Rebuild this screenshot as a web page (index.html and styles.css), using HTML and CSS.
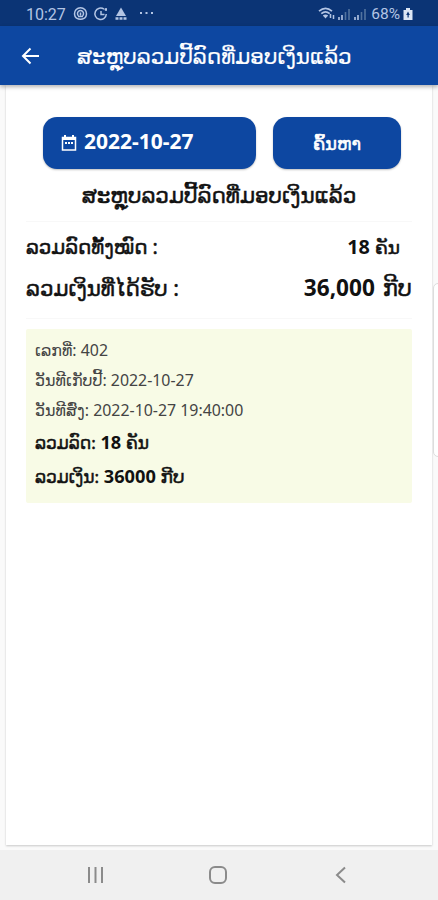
FILE: index.html
```html
<!DOCTYPE html>
<html lang="lo">
<head>
  <meta charset="UTF-8">
  <meta name="viewport" content="width=device-width, initial-scale=1">
  <title>ສະຫຼຸບລວມປີ້ລົດ</title>
  <link rel="stylesheet" href="styles.css">
</head>
<body>

  <!-- Status bar -->
  <div class="status-bar">
    <span class="clock">10:27</span>
    <svg class="status-icons" width="84" height="16" viewBox="0 0 84 16" fill="none" stroke="#b3c5e4" stroke-width="1.5">
      <path d="M3.5 12.2A6 6 0 1 1 11.500 12.200M3.500 12.200Q7.500 14.500 11.500 12.200"/>
      <path d="M5.500 9.800A3 3 0 1 1 9.500 9.800M7.500 6.500v3M5 10.500h5"/>
      <path d="M31 3.2A5.7 5.7 0 1 0 33.3 8M28 5v3.5h3.5M31.5 3.5h2.5M33 2v3"/>
      <path d="M48 1.5l5 8.5H43z" fill="#b3c5e4" stroke="none"/>
      <path d="M42.5 12.5h11" stroke-width="2.5" stroke-dasharray="3 1"/>
      <path d="M67 7h2M72.500 7h2M78 7h2" stroke-width="2"/>
    </svg>
    <svg class="signal-icons" width="49" height="16" viewBox="0 0 49 16" fill="none" stroke="#b3c5e4" stroke-width="1.7">
      <path d="M1 5.2Q7.5-.5 14 5.2M3.3 7.6Q7.5 4 11.7 7.6M5.5 10q2-1.5 4 0"/>
      <path d="M7.500 12.500L5 9.500h5z" fill="#b3c5e4" stroke="none"/>
      <path d="M12.500 8v4M15.500 9v4" stroke-width="1.500"/>
      <path d="M21 11v3M24 9v5M37 11v3M40 9v5" stroke-width="1.6"/>
      <path d="M27.5 6v8M31 3v11M43.5 6v8M47 3v11" stroke="#52739f" stroke-width="1.6"/>
    </svg>
    <span class="battery">68%</span>
    <svg class="battery-icon" width="10" height="14" viewBox="0 0 10 14">
      <path d="M3 1h4v2h2.500v10H.5V3H3z" fill="#dce6f5"/>
      <path d="M5 4.5L3.2 8h1.3v2.5h1.2V8h1.2z" fill="#0b3475"/>
    </svg>
  </div>

  <!-- App bar -->
  <header class="app-bar">
    <svg class="back" width="20" height="18" viewBox="0 0 20 18" fill="none" stroke="#fff" stroke-width="2">
      <path d="M18 9H2.500M9.500 1.500L2 9l7.500 7.500"/>
    </svg>
    <h1>ສະຫຼຸບລວມປີ້ລົດທີ່ມອບເງິນແລ້ວ</h1>
  </header>

  <main class="card">
    <div class="actions">
      <button class="date-btn">
        <svg width="16" height="18" viewBox="0 0 16 18" fill="none" stroke="#fff" stroke-width="1.5">
          <path d="M1.500 3.500h13v12.500h-13z"/>
          <path d="M1.500 4.500h13" stroke-width="3"/>
          <path d="M4 1v3M12 1v3" stroke-width="2"/>
          <path d="M4 9h8" stroke-width="2" stroke-dasharray="2 1"/>
        </svg>
        <span class="date">2022-10-27</span>
      </button>
      <button class="search-btn"><span class="lao">ຄົ້ນຫາ</span></button>
    </div>

    <h2 class="lao">ສະຫຼຸບລວມປີ້ລົດທີ່ມອບເງິນແລ້ວ</h2>

    <div class="summary">
      <div class="row cars">
        <span class="lao">ລວມລົດທັ້ງໝົດ :</span>
        <span class="value">18 <span class="lao">ຄັນ</span></span>
      </div>
      <div class="row money">
        <span class="lao">ລວມເງິນທີ່ໄດ້ຮັບ :</span>
        <span class="value">36,000 <span class="lao">ກີບ</span></span>
      </div>
    </div>

    <div class="ticket">
      <p>ເລກທີ່: 402</p>
      <p>ວັນທີເກັບປີ້: 2022-10-27</p>
      <p>ວັນທີສົ່ງ: 2022-10-27 19:40:00</p>
      <p class="total"><span class="lao">ລວມລົດ:</span> 18 <span class="lao">ຄັນ</span></p>
      <p class="total"><span class="lao">ລວມເງິນ:</span> 36000 <span class="lao">ກີບ</span></p>
    </div>
  </main>

  <!-- Edge panel handle -->
  <div class="edge-handle"></div>

  <nav class="nav-bar">
    <svg width="20" height="20" viewBox="0 0 20 20" fill="none" stroke="#8b8b8b" stroke-width="2">
      <path d="M4 2v16M10.500 2v16M17 2v16"/>
    </svg>
    <svg width="20" height="20" viewBox="0 0 20 20" fill="none" stroke="#8b8b8b" stroke-width="2">
      <rect x="2" y="2" width="16" height="16" rx="5"/>
    </svg>
    <svg width="20" height="20" viewBox="0 0 20 20" fill="none" stroke="#8b8b8b" stroke-width="2">
      <path d="M14 2.500L6 10l8 7.500"/>
    </svg>
  </nav>

</body>
</html>
```
FILE: styles.css
```css
* {
  box-sizing: border-box;
}
body {
  margin: 0;
  height: 900px;
  display: flex;
  flex-direction: column;
  overflow: hidden;
  background-color: #fafafa;
  color: #111;
  font-family: "Noto Sans", "DejaVu Sans", sans-serif;
}
h1, h2, p {
  margin: 0;
  font-weight: normal;
  white-space: nowrap;
}
svg {
  flex: none;
}
/* Lao text is the regular weight, thickened */
.lao {
  font-weight: normal;
  -webkit-text-stroke: 0.5px currentColor;
}

/* Top bars */
.status-bar {
  height: 26px;
  flex: none;
  display: flex;
  align-items: center;
  padding: 2px 25px 0 26px;
  background-color: #0b3475;
  color: #b3c5e4;
  font-family: Roboto, sans-serif;
  font-size: 16px;
}
.status-icons {
  margin-left: 7px;
}
.signal-icons {
  margin-left: auto;
}
.battery {
  margin-left: 4px;
  font-size: 15.5px;
}
.battery-icon {
  margin-left: 3px;
}
.app-bar {
  position: relative;
  height: 59px;
  flex: none;
  display: flex;
  align-items: center;
  padding-left: 21px;
  background-color: #0d47a1;
  color: #fff;
  box-shadow: 0 2px 4px rgba(0,0,0,0.3);
}
.app-bar h1 {
  margin-left: 36px;
  font-size: 21.5px;
  -webkit-text-stroke: 0.2px currentColor;
}

/* Content card */
.card {
  height: 760px;
  flex: none;
  margin: 0 6px;
  padding: 32px 20px 0;
  background-color: #fff;
  box-shadow: 0 1px 2px rgba(0,0,0,0.2);
}
.actions {
  display: flex;
  gap: 17px;
  padding-left: 17px;
}
button {
  height: 52px;
  border: none;
  border-radius: 14px;
  background-color: #0d47a1;
  color: #fff;
  font-family: inherit;
  font-weight: bold;
  box-shadow: 0 1px 2px rgba(0,0,0,0.25);
}
.date-btn {
  width: 213px;
  display: flex;
  align-items: center;
  gap: 7px;
  padding: 0 0 0 18px;
  font-size: 21px;
}
.date {
  padding-bottom: 4px;
}
.search-btn {
  width: 128px;
  font-size: 17.7px;
}
h2 {
  height: 52px;
  line-height: 51px;
  text-align: center;
  font-size: 21.5px;
}
.summary {
  height: 98px;
  border-top: 1px solid #f8f8f8;
  border-bottom: 1px solid #f8f8f8;
}
.row {
  display: flex;
  justify-content: space-between;
  white-space: nowrap;
  font-weight: bold;
}
.cars {
  height: 50px;
  line-height: 50px;
  padding-right: 12px;
  font-size: 19.8px;
}
.cars .value .lao {
  font-size: 18.5px;
}
.money {
  height: 34px;
  line-height: 32px;
  font-size: 21.4px;
}
.money .value {
  font-size: 22.6px;
  word-spacing: 2px;
}
.ticket {
  height: 174px;
  margin-top: 10px;
  padding: 6px 9px;
  border-radius: 2px;
  background-color: #f8fbe6;
  font-size: 15.9px;
}
.ticket p {
  height: 30px;
  line-height: 30px;
  color: #444;
}
.ticket .total {
  height: 34px;
  line-height: 34px;
  color: #111;
  font-size: 18.2px;
  font-weight: bold;
}
.total .lao {
  font-size: 17px;
}
.total:last-child .lao:last-child {
  font-size: 18.500px;
}

.edge-handle {
  position: absolute;
  top: 283px;
  right: -8px;
  width: 13px;
  height: 174px;
  border: 1px solid #ddd;
  border-radius: 5px;
  background-color: #fff;
}

/* Bottom navigation */
.nav-bar {
  height: 50px;
  margin-top: auto;
  display: flex;
  align-items: center;
  justify-content: space-between;
  padding: 0 87px 0 85px;
  background-color: #f0f0f0;
}
```
